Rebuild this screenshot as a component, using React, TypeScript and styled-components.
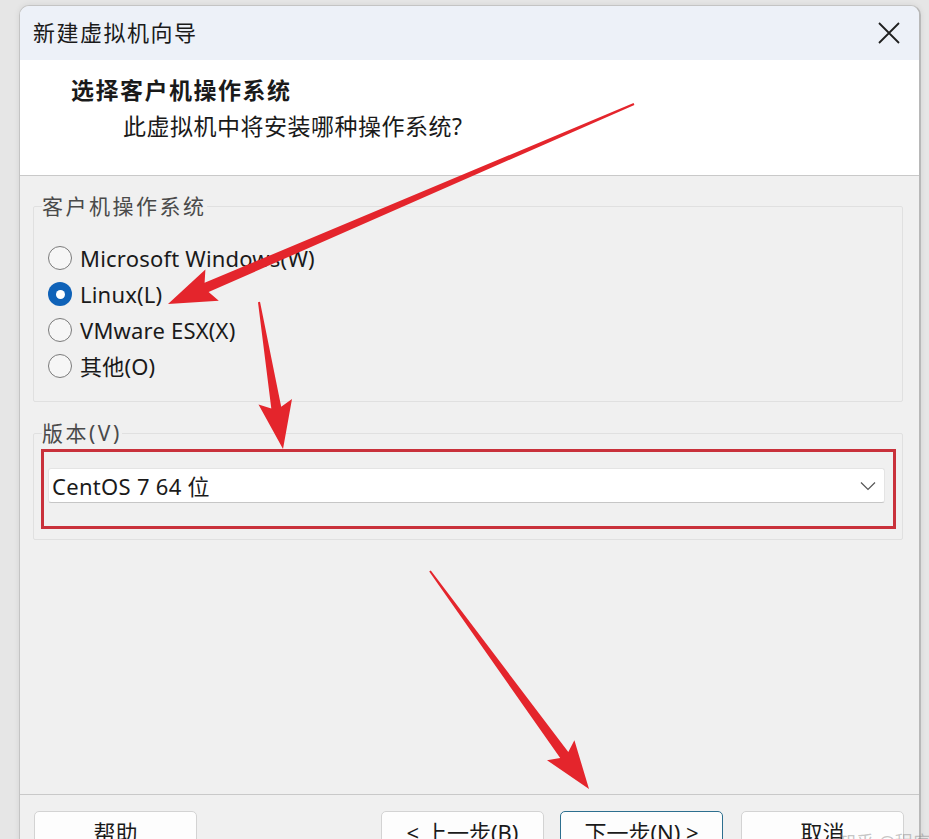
import React from 'react';
import styled, { createGlobalStyle } from 'styled-components';

const GlobalStyle = createGlobalStyle`
  html, body {
    margin: 0;
    padding: 0;
    background: #e6e6e6;
    overflow: hidden;
  }
  body {
    font-family: "Noto Sans", "Noto Sans CJK SC", sans-serif;
    color: #1a1a1a;
  }
`;

const osOptions = [
  { id: 'win', label: 'Microsoft Windows(W)', checked: false },
  { id: 'linux', label: 'Linux(L)', checked: true },
  { id: 'esx', label: 'VMware ESX(X)', checked: false },
  { id: 'other', label: '其他(O)', checked: false },
];

type Pt = [number, number];

// tapered arrow: thin tail, wider neck, triangle head
const arrowPoints = (tail: Pt, tip: Pt, headLen = 48, headWidth = 34) => {
  const dx = tip[0] - tail[0];
  const dy = tip[1] - tail[1];
  const len = Math.hypot(dx, dy);
  const ux = dx / len;
  const uy = dy / len;
  const nx = -uy;
  const ny = ux;
  const neck: Pt = [tip[0] - ux * (headLen - 6), tip[1] - uy * (headLen - 6)];
  const base: Pt = [tip[0] - ux * headLen, tip[1] - uy * headLen];
  const at = (p: Pt, w: number): Pt => [p[0] + nx * w, p[1] + ny * w];
  const pts: Pt[] = [
    at(tail, 1),
    at(neck, 5),
    at(base, headWidth / 2),
    tip,
    at(base, -headWidth / 2),
    at(neck, -5),
    at(tail, -1),
  ];
  return pts.map(p => `${p[0].toFixed(1)},${p[1].toFixed(1)}`).join(' ');
};

const arrows: { tail: Pt; tip: Pt }[] = [
  { tail: [634, 104], tip: [168, 304] },
  { tail: [259, 302], tip: [283, 449] },
  { tail: [430, 571], tip: [589, 789] },
];

const App: React.FC = () => {
  return (
    <>
      <GlobalStyle />
      <Page>
        <Window>
          <TitleBar>
            <TitleText>新建虚拟机向导</TitleText>
            <CloseButton aria-label="关闭">
              <svg width="22" height="22" viewBox="0 0 22 22">
                <path d="M1 1 L21 21 M21 1 L1 21" stroke="#1f1f1f" strokeWidth="1.8" fill="none" />
              </svg>
            </CloseButton>
          </TitleBar>

          <Header>
            <HeaderTitle>选择客户机操作系统</HeaderTitle>
            <HeaderSub>此虚拟机中将安装哪种操作系统?</HeaderSub>
          </Header>

          <Body>
            <GroupBox>
              <GroupLegend>客户机操作系统</GroupLegend>
              <RadioList>
                {osOptions.map(({ id, label, checked }) => (
                  <RadioRow key={id}>
                    <RadioCircle checked={checked} />
                    <RadioLabel>{label}</RadioLabel>
                  </RadioRow>
                ))}
              </RadioList>
            </GroupBox>

            <GroupBox>
              <GroupLegend>版本(V)</GroupLegend>
              <Highlight>
                <Select>
                  <SelectValue>CentOS 7 64 位</SelectValue>
                  <svg width="16" height="10" viewBox="0 0 16 10">
                    <path d="M1 1.5 L8 8.5 L15 1.5" stroke="#555" strokeWidth="1.2" fill="none" />
                  </svg>
                </Select>
              </Highlight>
            </GroupBox>
          </Body>

          <Footer>
            <DialogButton>帮助</DialogButton>
            <Spacer />
            <DialogButton>&lt; 上一步(B)</DialogButton>
            <DialogButton primary>下一步(N) &gt;</DialogButton>
            <DialogButton wide>取消</DialogButton>
          </Footer>
        </Window>

        <Watermark>知乎 @程序员</Watermark>

        <ArrowLayer width="929" height="839" viewBox="0 0 929 839">
          {arrows.map(({ tail, tip }, i) => (
            <polygon key={i} points={arrowPoints(tail, tip)} fill="#e4252c" />
          ))}
        </ArrowLayer>
      </Page>
    </>
  );
};

const Page = styled.div`
  position: relative;
  width: 929px;
  height: 839px;
  overflow: hidden;
  padding: 5px 0 0 19px;
  box-sizing: border-box;
`;

const Window = styled.div`
  width: 902px;
  height: 880px;
  box-sizing: border-box;
  display: flex;
  flex-direction: column;
  background: #f0f0f0;
  border: 1px solid #c4c4c4;
  border-right: 2px solid #b8b8b8;
  border-radius: 10px 10px 0 0;
  overflow: hidden;
  box-shadow: 0 0 6px rgba(0, 0, 0, 0.08);
`;

const TitleBar = styled.div`
  height: 54px;
  display: flex;
  align-items: center;
  justify-content: space-between;
  padding: 0 19px 4px 13px;
  box-sizing: border-box;
  background: #edf1f8;
`;

const TitleText = styled.span`
  font-size: 22px;
  letter-spacing: 1.5px;
`;

const CloseButton = styled.div`
  display: flex;
  align-items: center;
  padding-top: 4px;
`;

const Header = styled.div`
  height: 116px;
  box-sizing: border-box;
  background: #ffffff;
  border-bottom: 1px solid #c9c9c9;
  padding: 15px 0 0 51px;
`;

const HeaderTitle = styled.div`
  font-size: 23px;
  font-weight: bold;
  line-height: 30px;
  letter-spacing: 1.5px;
`;

const HeaderSub = styled.div`
  font-size: 23px;
  line-height: 30px;
  margin-top: 6px;
  margin-left: 52px;
  letter-spacing: 0.5px;
`;

const Body = styled.div`
  flex: 1;
  display: flex;
  flex-direction: column;
  gap: 17px;
  padding: 16px 16px 0 13px;
`;

const GroupBox = styled.fieldset`
  margin: 0;
  padding: 0 0 10px 0;
  border: 1px solid #e0e0e0;
  border-radius: 2px;
  min-width: 0;
`;

const GroupLegend = styled.legend`
  margin-left: 8px;
  padding: 0;
  font-size: 21px;
  line-height: 28px;
  color: #4a4a4a;
  letter-spacing: 2.5px;
`;

const RadioList = styled.div`
  display: flex;
  flex-direction: column;
  padding: 20px 0 7px 14px;
`;

const RadioRow = styled.div`
  display: flex;
  align-items: center;
  gap: 8px;
  height: 36px;
`;

const RadioCircle = styled.span<{ checked: boolean }>`
  width: 24px;
  height: 24px;
  box-sizing: border-box;
  border-radius: 50%;
  flex-shrink: 0;
  background: ${props => props.checked ? '#0f62b8' : '#f6f6f6'};
  border: ${props => props.checked ? 'none' : '1.5px solid #7a7a7a'};
  display: flex;
  align-items: center;
  justify-content: center;

  &::after {
    content: '';
    display: ${props => props.checked ? 'block' : 'none'};
    width: 9px;
    height: 9px;
    border-radius: 50%;
    background: #ffffff;
  }
`;

const RadioLabel = styled.span`
  font-size: 22px;
  line-height: 30px;
  letter-spacing: 0.2px;
`;

const Highlight = styled.div`
  margin: 2px 6px 0 7px;
  border: 3px solid #c9313b;
  padding: 16px 8px 23px 4px;
`;

const Select = styled.div`
  height: 35px;
  box-sizing: border-box;
  display: flex;
  align-items: center;
  justify-content: space-between;
  padding: 0 8px 0 3px;
  background: #ffffff;
  border: 1px solid #e4e4e4;
  border-bottom-color: #c6c6c6;
  border-radius: 3px;
`;

const SelectValue = styled.span`
  font-size: 22px;
  line-height: 30px;
  letter-spacing: 0.3px;
`;

const Footer = styled.div`
  display: flex;
  align-items: flex-start;
  gap: 16px;
  height: 90px;
  box-sizing: border-box;
  border-top: 1px solid #c9c9c9;
  padding: 16px 15px 0 14px;
`;

const Spacer = styled.div`
  flex: 1;
`;

const DialogButton = styled.div<{ primary?: boolean; wide?: boolean }>`
  width: 163px;
  height: 40px;
  box-sizing: border-box;
  margin-left: ${props => props.wide ? '2px' : '0'};
  display: flex;
  align-items: center;
  justify-content: center;
  padding-top: 2px;
  background: #fdfdfd;
  border: 1px solid ${props => props.primary ? '#2d6f8f' : '#d3d3d3'};
  border-radius: 5px;
  font-size: 22px;
  line-height: 28px;
  color: #1a1a1a;
`;

const Watermark = styled.div`
  position: absolute;
  left: 838px;
  top: 828px;
  font-size: 18px;
  color: rgba(130, 130, 130, 0.45);
  white-space: nowrap;
`;

const ArrowLayer = styled.svg`
  position: absolute;
  left: 0;
  top: 0;
  pointer-events: none;
`;

export default App;
